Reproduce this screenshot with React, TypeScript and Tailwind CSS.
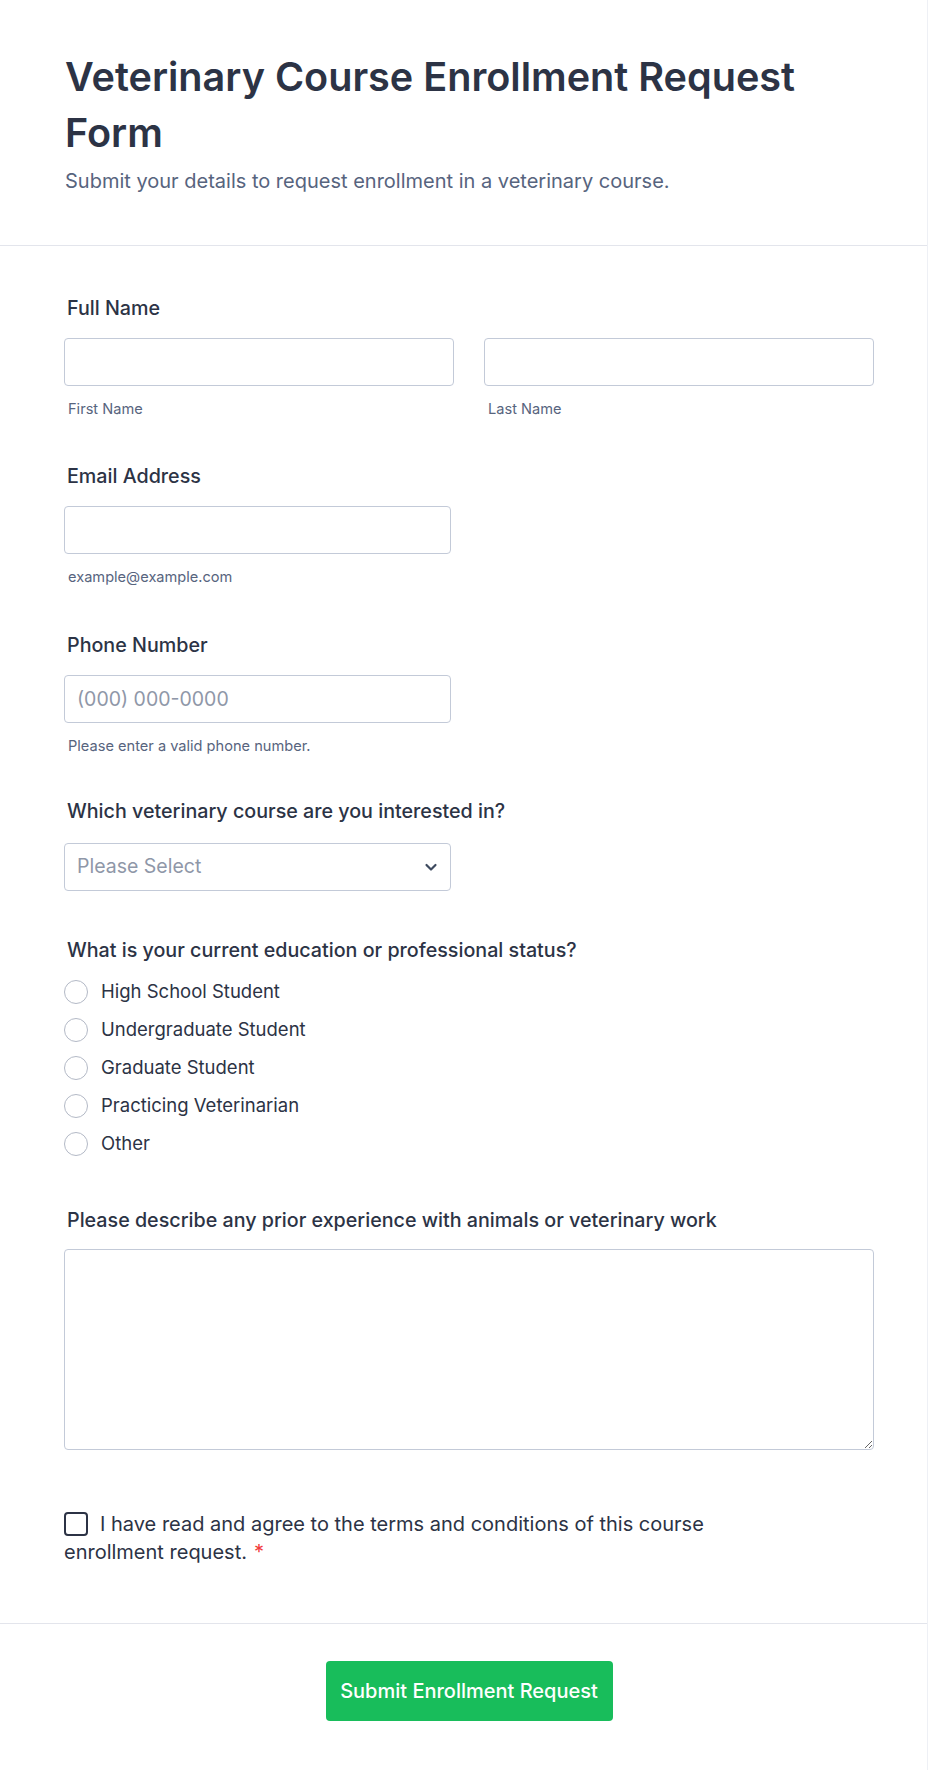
import React from "react";

const FONT = { fontFamily: "Inter, 'Noto Sans', sans-serif" };

const STATUS_OPTIONS = [
  "High School Student",
  "Undergraduate Student",
  "Graduate Student",
  "Practicing Veterinarian",
  "Other",
];

function Label({ children }: { children: React.ReactNode }) {
  return <div className="pl-[3px] text-[19.7px] leading-[28px] font-medium text-[#2c3345]">{children}</div>;
}

function SubLabel({ children }: { children: React.ReactNode }) {
  return <div className="mt-[14px] pl-[4px] text-[14.6px] leading-[18px] text-[#57647e]">{children}</div>;
}

function TextBox({ placeholder, className = "" }: { placeholder?: string; className?: string }) {
  return (
    <input
      type="text"
      placeholder={placeholder}
      className={`h-[48px] w-full rounded-[4px] border border-[#c3cad8] bg-white px-[12px] text-[19.5px] text-[#2c3345] placeholder:text-[#8f97a8] outline-none ${className}`}
    />
  );
}

export default function App() {
  return (
    <div className="min-h-screen bg-white" style={FONT}>
      <div className="w-[928px] border-r border-b border-[#eef0f5] bg-white">
        {/* header */}
        <div className="pl-[65px] pr-[53px] pt-[49px] pb-[50px]">
          <h1 className="text-[39.6px] leading-[56px] font-semibold text-[#2c3345]">
            Veterinary Course Enrollment Request Form
          </h1>
          <p className="mt-[6px] text-[20px] leading-[28px] text-[#57647e]">
            Submit your details to request enrollment in a veterinary course.
          </p>
        </div>

        <div className="border-t border-[#e3e5ec]" />

        <form className="pl-[64px] pr-[53px] pt-[48px]">
          {/* full name */}
          <Label>Full Name</Label>
          <div className="mt-[16px] grid grid-cols-2 gap-[30px]">
            <div>
              <TextBox />
              <SubLabel>First Name</SubLabel>
            </div>
            <div>
              <TextBox />
              <SubLabel>Last Name</SubLabel>
            </div>
          </div>

          {/* email */}
          <div className="mt-[44px]">
            <Label>Email Address</Label>
            <div className="mt-[16px] w-[387px]">
              <TextBox />
              <SubLabel>example@example.com</SubLabel>
            </div>
          </div>

          {/* phone */}
          <div className="mt-[45px]">
            <Label>Phone Number</Label>
            <div className="mt-[16px] w-[387px]">
              <TextBox placeholder="(000) 000-0000" />
              <SubLabel>Please enter a valid phone number.</SubLabel>
            </div>
          </div>

          {/* course */}
          <div className="mt-[42px]">
            <Label>Which veterinary course are you interested in?</Label>
            <div className="mt-[18px] flex h-[48px] w-[387px] items-center justify-between rounded-[4px] border border-[#c3cad8] bg-white pl-[12px] pr-[11px]">
              <span className="text-[19.5px] text-[#8f97a8]">Please Select</span>
              <svg width="16" height="16" viewBox="0 0 16 16" fill="none">
                <path d="M3.5 6l4.5 4.5 4.5-4.5" stroke="#3e4a5f" strokeWidth="2.2" strokeLinecap="round" strokeLinejoin="round" />
              </svg>
            </div>
          </div>

          {/* status */}
          <div className="mt-[45px]">
            <Label>What is your current education or professional status?</Label>
            <div className="mt-[9px] flex flex-col">
              {STATUS_OPTIONS.map((opt) => (
                <label key={opt} className="flex h-[38px] items-center gap-[13px]">
                  <span className="h-[24px] w-[24px] shrink-0 rounded-full border border-[#b3b9c6] bg-white" />
                  <span className="text-[18.5px] text-[#2c3345]">{opt}</span>
                </label>
              ))}
            </div>
          </div>

          {/* experience */}
          <div className="mt-[43px]">
            <Label>Please describe any prior experience with animals or veterinary work</Label>
            <textarea className="mt-[15px] block h-[201px] w-full rounded-[4px] border border-[#c3cad8] bg-white outline-none" />
          </div>

          {/* terms */}
          <div className="mt-[57px] mb-[57px] w-[690px] text-[20px] leading-[28px] text-[#2c3345]">
            <span className="mr-[12px] inline-block h-[24px] w-[24px] translate-y-[5px] rounded-[4px] border-2 border-[#2c3345] bg-white" />
            I have read and agree to the terms and conditions of this course enrollment request.
            <span className="ml-[7px] text-[#f23a3c]">*</span>
          </div>
        </form>

        <div className="border-t border-[#e3e5ec]" />

        <div className="flex justify-center pl-[64px] pr-[53px] pt-[37px] pb-[49px]">
          <button
            type="button"
            className="h-[60px] w-[287px] rounded-[4px] bg-[#18bd5b] text-[20px] font-medium text-white"
          >
            Submit Enrollment Request
          </button>
        </div>
      </div>
    </div>
  );
}
